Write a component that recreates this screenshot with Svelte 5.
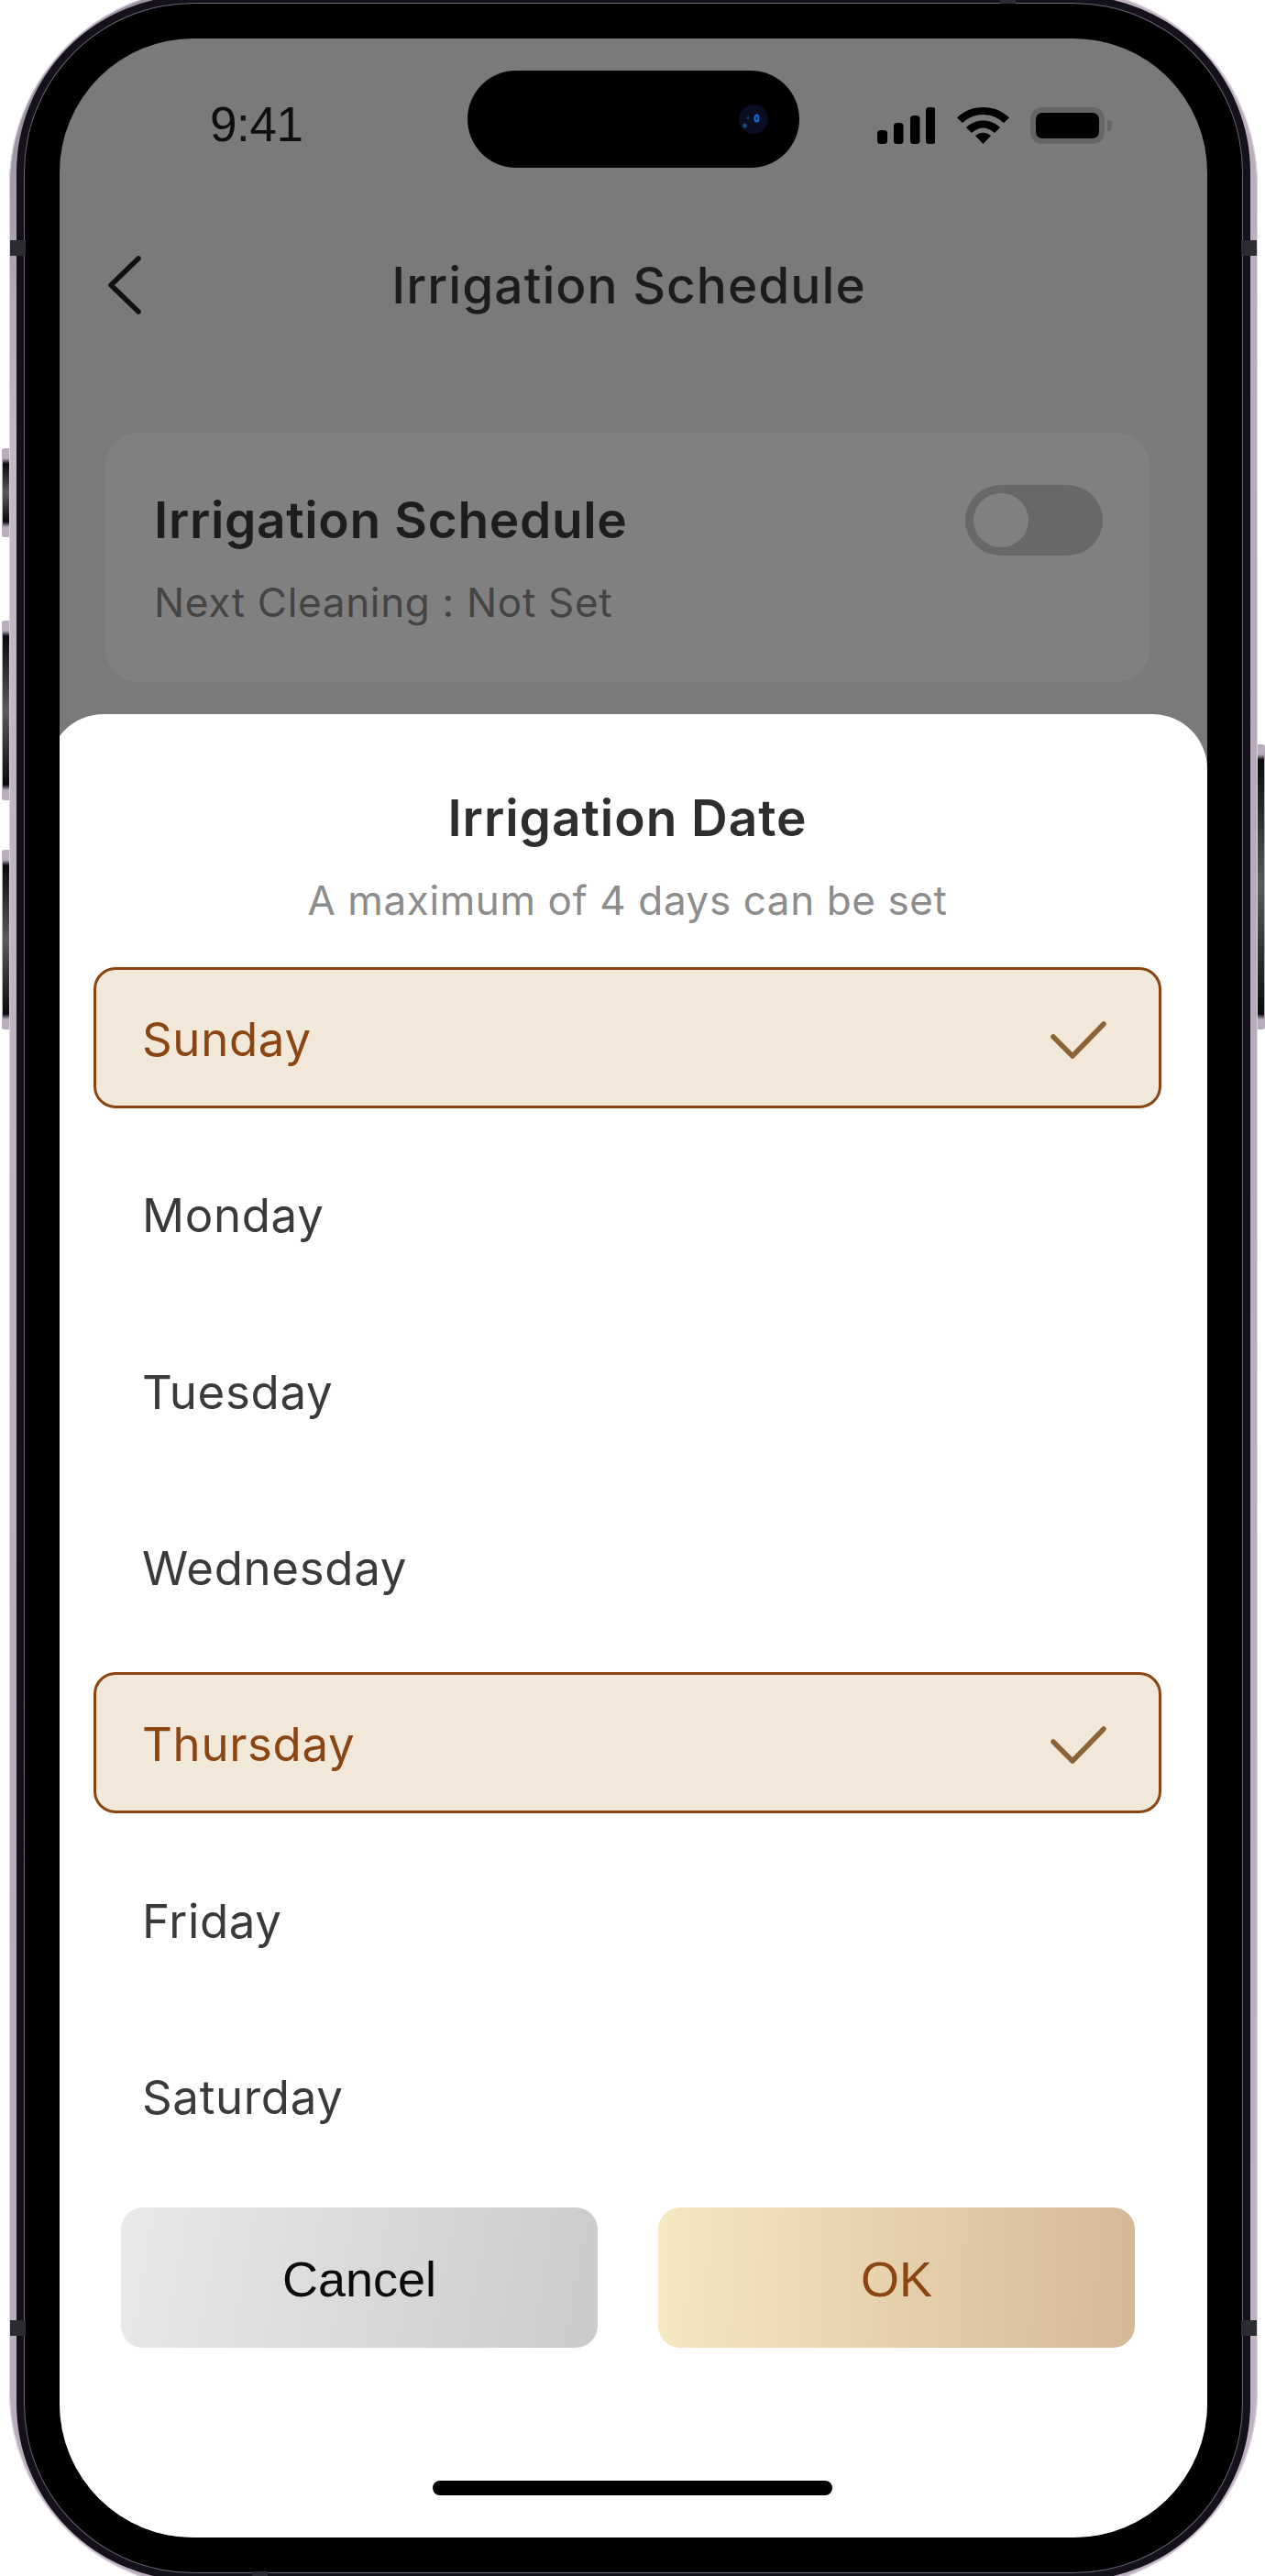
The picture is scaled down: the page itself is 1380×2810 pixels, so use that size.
<script>
  const days = [
    { name: 'Sunday', on: true },
    { name: 'Monday', on: false },
    { name: 'Tuesday', on: false },
    { name: 'Wednesday', on: false },
    { name: 'Thursday', on: true },
    { name: 'Friday', on: false },
    { name: 'Saturday', on: false }
  ];
</script>

<div class="page">
  <div class="rim">
    <div class="band">
      <div class="line">
        <div class="bezel">
          <div class="screen">
            <div class="status">
              <div class="time">9:41</div>
              <div class="island">
                <svg class="cam" width="32" height="32" viewBox="0 0 32 32">
                  <circle cx="16" cy="16" r="16" fill="#0b0d22" />
                  <ellipse cx="19.5" cy="15" rx="3" ry="4.5" fill="#1668d8" />
                  <ellipse cx="19.5" cy="15" rx="1.2" ry="2.2" fill="#0a2a60" />
                  <circle cx="10" cy="14.5" r="1.3" fill="#123a70" />
                  <ellipse cx="6.5" cy="23" rx="2.2" ry="2.6" fill="#14508f" />
                </svg>
              </div>
              <div class="icons">
                <svg class="signal" width="63" height="40" viewBox="0 0 63 40">
                  <rect x="0" y="25" width="11" height="15" rx="3.5" />
                  <rect x="18" y="17" width="10.5" height="23" rx="3.5" />
                  <rect x="36" y="9" width="10.5" height="31" rx="3.5" />
                  <rect x="53" y="0" width="10.5" height="40" rx="3.5" />
                </svg>
                <svg class="wifi" width="57" height="40" viewBox="0 0 57 40">
                  <path d="M0 11.5C15-3.8 42-3.8 57 11.5L51 17C38 5 19 5 6 17Z" />
                  <path d="M10 22C20 12 37 12 47 22L41 28C33 20.5 24 20.5 16 28Z" />
                  <path d="M20 31C25 26.5 32 26.5 37 31L28.5 40Z" />
                </svg>
                <div class="battery"><div class="level"></div></div>
                <div class="cap"></div>
              </div>
            </div>

            <header class="head">
              <svg class="back" width="38" height="66" viewBox="0 0 38 66">
                <path d="M34 4L4 33L34 62" fill="none" stroke="#111" stroke-width="5.5" stroke-linecap="round" stroke-linejoin="round" />
              </svg>
              <h1>Irrigation Schedule</h1>
            </header>

            <section class="card">
              <div class="info">
                <h2>Irrigation Schedule</h2>
                <p>Next Cleaning : Not Set</p>
              </div>
              <div class="toggle"><div class="knob"></div></div>
            </section>

            <div class="sheet">
              <h3>Irrigation Date</h3>
              <p class="hint">A maximum of 4 days can be set</p>
              <ul class="days">
                {#each days as d}
                  <li class:on={d.on}>
                    <span>{d.name}</span>
                    {#if d.on}
                      <svg width="64" height="44" viewBox="0 0 64 44">
                        <path d="M4 19L25 40L59 5" fill="none" stroke="#8a6336" stroke-width="5.5" stroke-linecap="round" stroke-linejoin="round" />
                      </svg>
                    {/if}
                  </li>
                {/each}
              </ul>
              <div class="actions">
                <button class="cancel">Cancel</button>
                <button class="ok">OK</button>
              </div>
            </div>
            <div class="home"></div>
          </div>
        </div>
      </div>
    </div>
    <i class="btn mute"></i>
    <i class="btn volup"></i>
    <i class="btn voldown"></i>
    <i class="btn power"></i>
    <i class="seam s1"></i>
    <i class="seam s2"></i>
    <i class="seam s3"></i>
    <i class="seam s4"></i>
    <i class="seam s5"></i>
    <i class="seam s6"></i>
  </div>
</div>

<style>
  :global(body) { margin: 0; background: #fff; }
  .page { width: 1380px; height: 2810px; overflow: hidden; background: #fff; font-family: Inter, "Noto Sans", sans-serif; }
  .rim { position: relative; box-sizing: border-box; margin: -13px 8px 0 10px; height: 2836px; padding: 8px; border-radius: 215px; background: linear-gradient(135deg, #8a8494 0%, #c4b8c6 12%, #b7abbb 50%, #c0b4c4 100%); box-shadow: inset 0 0 0 1px #ddd6e0; }
  .band { height: 100%; box-sizing: border-box; padding: 8px; border-radius: 193px; background: #14111a; }
  .line { height: 100%; box-sizing: border-box; padding: 1px; border-radius: 185px; background: #6b6478; }
  .bezel { height: 100%; box-sizing: border-box; padding: 38px; border-radius: 184px; background: #000; }
  .screen { position: relative; height: 100%; overflow: hidden; border-radius: 146px; background: #7a7a7a; }

  .status { display: flex; height: 106px; padding-top: 35px; }
  .time { box-sizing: border-box; width: 445px; padding: 0 0 0 164px; margin-top: 30px; font: 400 53px/58px "Liberation Sans", Arial, sans-serif; letter-spacing: -0.4px; color: #0f0f0f; }
  .island { display: flex; align-items: center; justify-content: flex-end; box-sizing: border-box; width: 362px; height: 106px; padding-right: 34px; border-radius: 53px; background: #000; }
  .icons { display: flex; align-items: flex-start; margin: 40px 0 0 85px; }
  .wifi { margin-left: 24px; }
  .battery { box-sizing: border-box; width: 81px; height: 40px; margin-left: 23px; padding: 6px; border-radius: 13px; background: #666; }
  .level { height: 100%; border-radius: 7px; background: #000; }
  .cap { width: 5px; height: 12px; margin: 14px 0 0 3px; border-radius: 0 4px 4px 0; background: #666; }

  .head { position: relative; display: flex; align-items: center; justify-content: center; width: 1242px; height: 102px; margin-top: 77px; }
  .back { position: absolute; left: 52px; top: 18px; }
  h1 { margin: 0; font-size: 55px; font-weight: 500; line-height: 60px; letter-spacing: 1.05px; color: #1c1c1c; }

  .card { display: flex; align-items: flex-start; justify-content: space-between; box-sizing: border-box; width: 1139px; height: 272px; margin: 110px 0 0 50px; padding: 0 51px 0 53px; border-radius: 36px; background: #808080; }
  .info { margin-top: 65px; }
  h2 { margin: 0; font-size: 55px; font-weight: 600; line-height: 60px; letter-spacing: 0.65px; color: #1d1d1d; }
  .card p { margin: 35px 0 0; font-size: 44px; line-height: 50px; letter-spacing: 0.68px; color: #444; }
  .toggle { box-sizing: border-box; width: 150px; height: 77px; margin-top: 57px; padding: 9px; border-radius: 39px; background: #686868; }
  .knob { width: 60px; height: 59px; border-radius: 50%; background: #808080; }

  .sheet { position: absolute; left: -12px; right: 0; top: 737px; bottom: 0; box-sizing: border-box; padding: 81.5px 50px 0 49px; border-radius: 60px 60px 0 0; background: #fff; }
  h3 { margin: 0; font-size: 55px; font-weight: 600; line-height: 62px; letter-spacing: 0.95px; text-align: center; color: #2e2e2e; }
  .hint { margin: 31.5px 0 0; font-size: 44px; line-height: 56px; letter-spacing: 0.6px; text-align: center; color: #8c8c8c; }
  .days { display: flex; flex-direction: column; gap: 38.33px; margin: 45px 0 0; padding: 0; list-style: none; }
  .days li { display: flex; align-items: center; justify-content: space-between; box-sizing: border-box; height: 154px; padding: 3px 55px 0 50px; border: 3px solid transparent; border-radius: 24px; font-size: 51px; letter-spacing: 0.65px; color: #3a3a3a; }
  .days li.on { border-color: #8b4513; background: #f1e8da; color: #8b4513; }
  .actions { display: flex; gap: 66px; margin: 45px 0 0 30px; }
  .actions button { width: 520px; height: 153px; padding: 3px 0 0; border: 0; border-radius: 24px; font: 400 54px/60px "Liberation Sans", Arial, sans-serif; }
  .cancel { background: linear-gradient(100deg, #e9e9e9, #cbcbcb); color: #0c0c0c; }
  .ok { background: linear-gradient(92deg, #f6e8c1, #d6b997); color: #8b4513; }
  .home { position: absolute; left: 407px; bottom: 46px; width: 436px; height: 16px; border-radius: 8px; background: #000; }

  .btn { position: absolute; left: -8px; width: 8px; box-sizing: border-box; border: 1px solid #b8adbc; border-right: 0; border-radius: 3px 0 0 3px; background: linear-gradient(to bottom, #b8adbc 0, #b8adbc 10px, #0a0a0a 16px, #5a5a5a 50%, #0a0a0a calc(100% - 16px), #b8adbc calc(100% - 10px), #b8adbc 100%); }
  .mute { top: 502px; height: 97px; }
  .volup { top: 690px; height: 196px; }
  .voldown { top: 940px; height: 196px; }
  .power { left: auto; right: -8px; top: 825px; height: 311px; border: 1px solid #b8adbc; border-left: 0; border-radius: 0 3px 3px 0; }
  .seam { position: absolute; background: #2c2c32; }
  .s1, .s2 { left: 1px; width: 17px; height: 17px; }
  .s3, .s4 { right: 1px; width: 17px; height: 17px; }
  .s1, .s3 { top: 275px; }
  .s2, .s4 { top: 2544px; }
  .s5 { top: 13px; left: 1081px; width: 17px; height: 4px; }
  .s6 { bottom: 13px; left: 265px; width: 17px; height: 5px; }
</style>
